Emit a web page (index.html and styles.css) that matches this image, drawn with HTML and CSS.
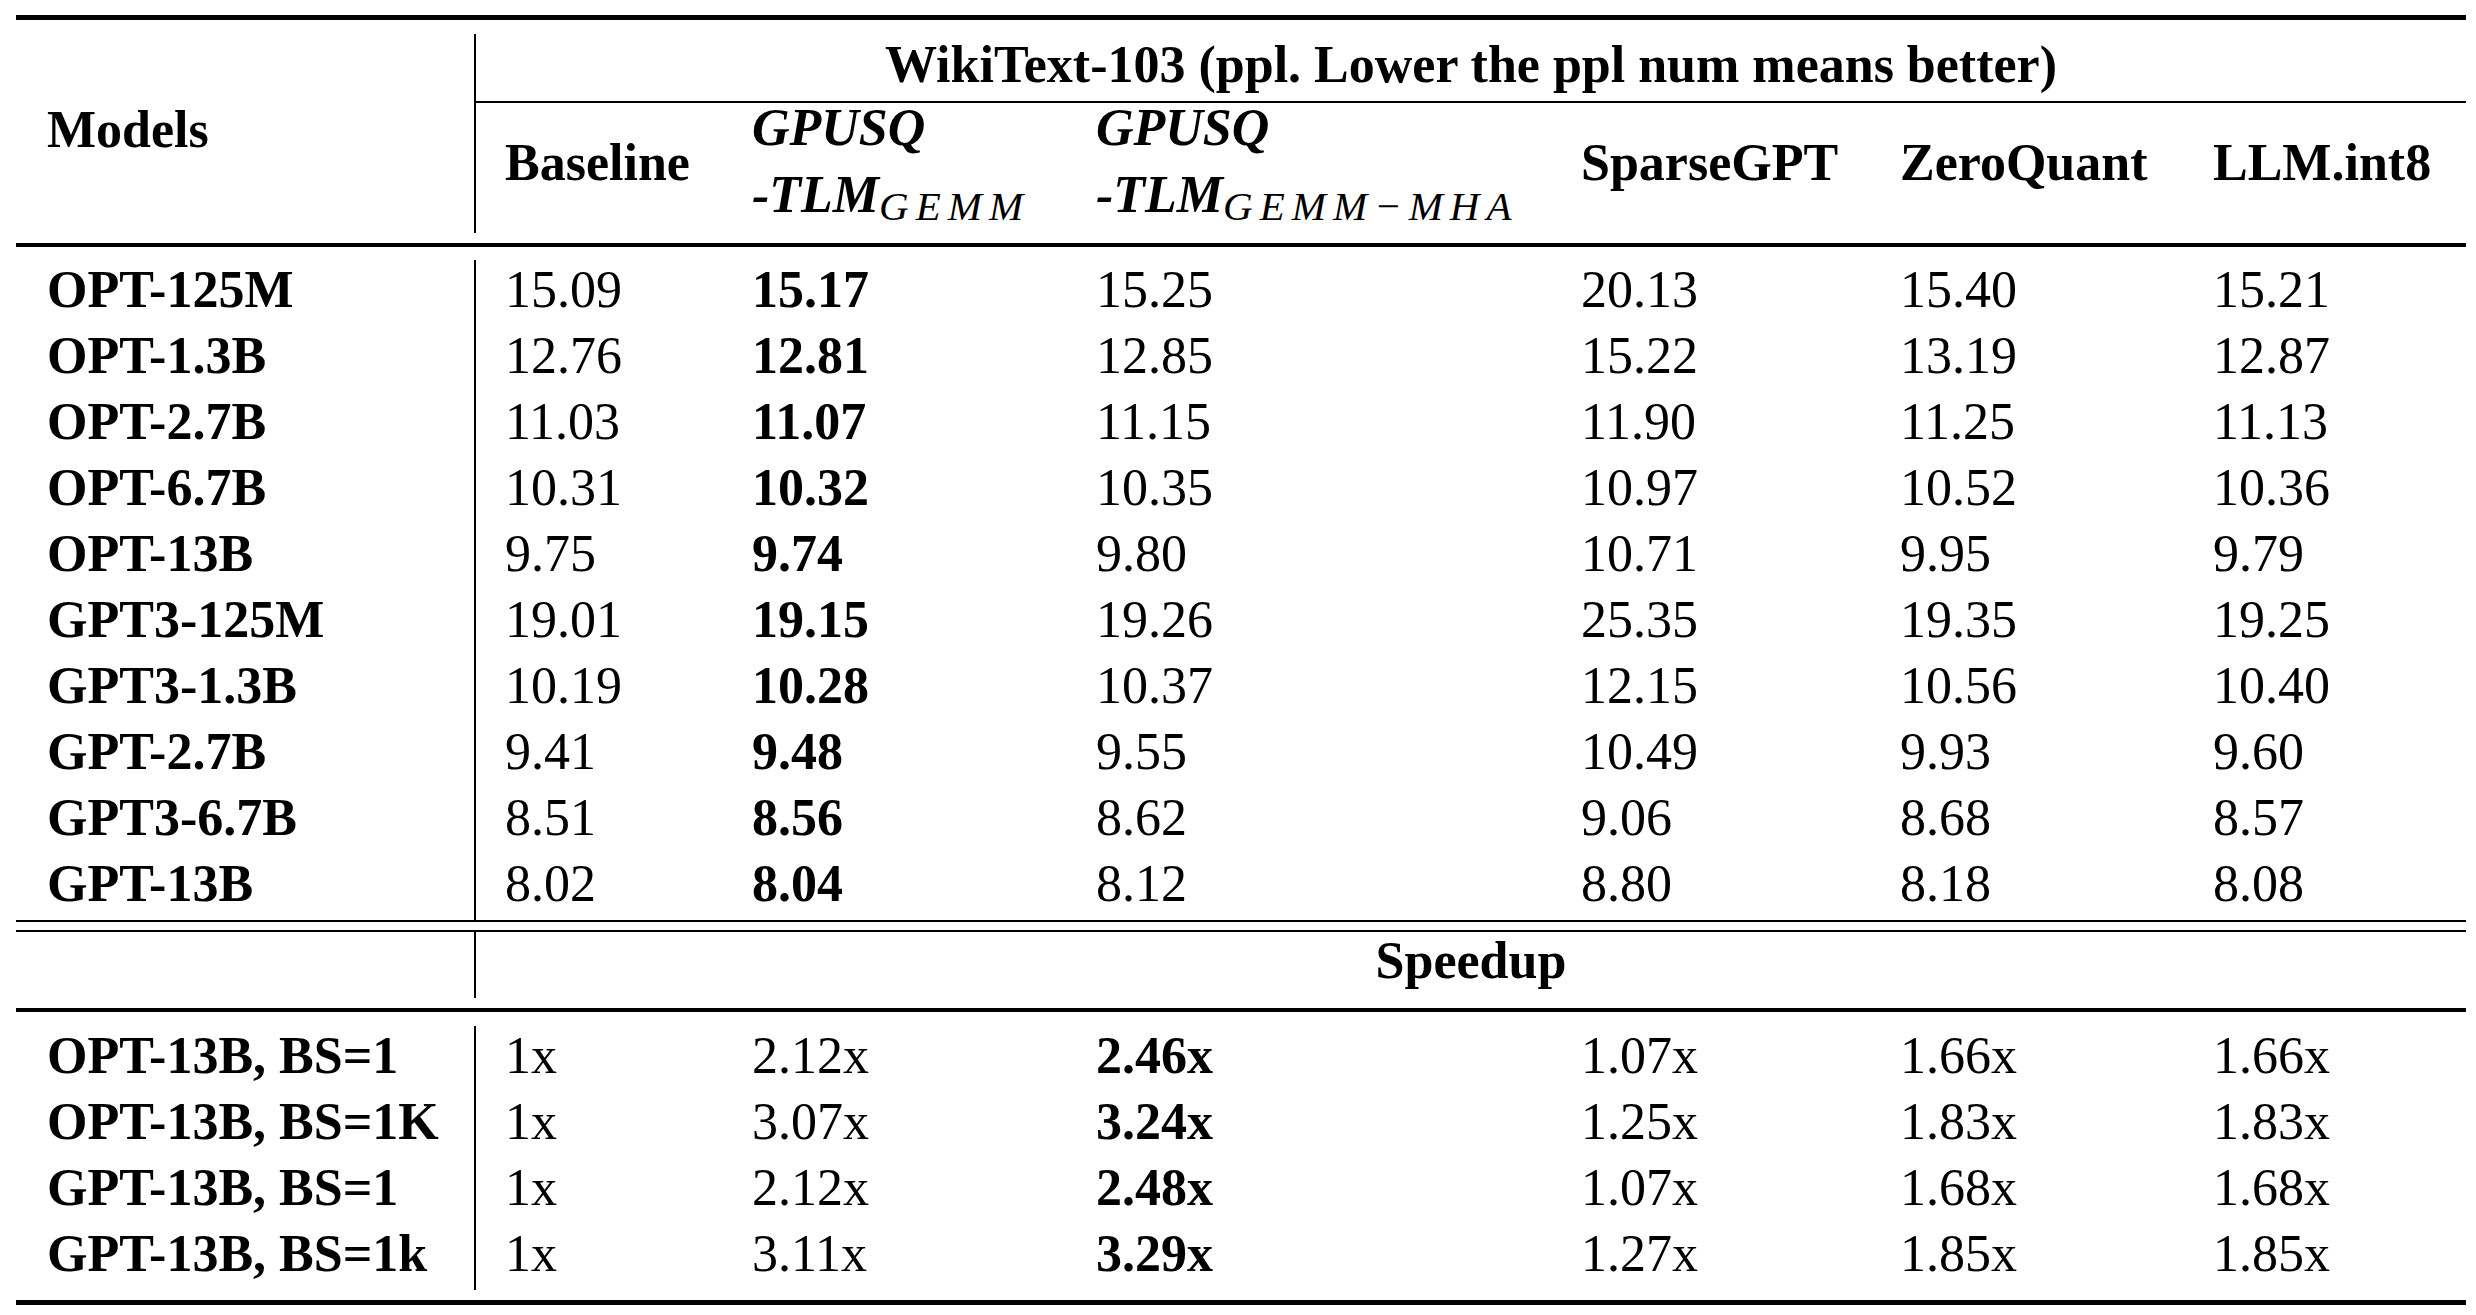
FILE: index.html
```html
<!DOCTYPE html>
<html lang="en">
<head>
<meta charset="utf-8">
<title>WikiText-103 results</title>
<link rel="stylesheet" href="styles.css">
</head>
<body>
<div class="tbl">
  <div class="rule r5"></div>

  <div class="head">
    <div class="models">Models</div>
    <div class="head-right">
      <div class="wiki">WikiText-103 (ppl. Lower the ppl num means better)</div>
      <div class="subhead">
        <div class="sh first single">Baseline</div>
        <div class="sh double"><span class="ln l1">GPUSQ</span><span class="ln l2">-TLM<span class="sub">GEMM</span></span></div>
        <div class="sh double"><span class="ln l1">GPUSQ</span><span class="ln l2">-TLM<span class="sub">GEMM−MHA</span></span></div>
        <div class="sh single">SparseGPT</div>
        <div class="sh single">ZeroQuant</div>
        <div class="sh single">LLM.int8</div>
      </div>
    </div>
  </div>

  <div class="rule r4"></div>

  <div class="sec sec-ppl">
    <div class="c b">OPT-125M</div><div class="c v">15.09</div><div class="c b">15.17</div><div class="c">15.25</div><div class="c">20.13</div><div class="c">15.40</div><div class="c">15.21</div>
    <div class="c b">OPT-1.3B</div><div class="c v">12.76</div><div class="c b">12.81</div><div class="c">12.85</div><div class="c">15.22</div><div class="c">13.19</div><div class="c">12.87</div>
    <div class="c b">OPT-2.7B</div><div class="c v">11.03</div><div class="c b">11.07</div><div class="c">11.15</div><div class="c">11.90</div><div class="c">11.25</div><div class="c">11.13</div>
    <div class="c b">OPT-6.7B</div><div class="c v">10.31</div><div class="c b">10.32</div><div class="c">10.35</div><div class="c">10.97</div><div class="c">10.52</div><div class="c">10.36</div>
    <div class="c b">OPT-13B</div><div class="c v">9.75</div><div class="c b">9.74</div><div class="c">9.80</div><div class="c">10.71</div><div class="c">9.95</div><div class="c">9.79</div>
    <div class="c b">GPT3-125M</div><div class="c v">19.01</div><div class="c b">19.15</div><div class="c">19.26</div><div class="c">25.35</div><div class="c">19.35</div><div class="c">19.25</div>
    <div class="c b">GPT3-1.3B</div><div class="c v">10.19</div><div class="c b">10.28</div><div class="c">10.37</div><div class="c">12.15</div><div class="c">10.56</div><div class="c">10.40</div>
    <div class="c b">GPT-2.7B</div><div class="c v">9.41</div><div class="c b">9.48</div><div class="c">9.55</div><div class="c">10.49</div><div class="c">9.93</div><div class="c">9.60</div>
    <div class="c b">GPT3-6.7B</div><div class="c v">8.51</div><div class="c b">8.56</div><div class="c">8.62</div><div class="c">9.06</div><div class="c">8.68</div><div class="c">8.57</div>
    <div class="c b">GPT-13B</div><div class="c v">8.02</div><div class="c b">8.04</div><div class="c">8.12</div><div class="c">8.80</div><div class="c">8.18</div><div class="c">8.08</div>
  </div>

  <div class="rule r2"></div>
  <div class="rule r2 dbl"></div>

  <div class="sp-head">
    <div class="sp-left"></div>
    <div class="sp-title">Speedup</div>
  </div>

  <div class="rule r4"></div>

  <div class="sec sec-speed">
    <div class="c b">OPT-13B, BS=1</div><div class="c v">1x</div><div class="c">2.12x</div><div class="c b">2.46x</div><div class="c">1.07x</div><div class="c">1.66x</div><div class="c">1.66x</div>
    <div class="c b">OPT-13B, BS=1K</div><div class="c v">1x</div><div class="c">3.07x</div><div class="c b">3.24x</div><div class="c">1.25x</div><div class="c">1.83x</div><div class="c">1.83x</div>
    <div class="c b">GPT-13B, BS=1</div><div class="c v">1x</div><div class="c">2.12x</div><div class="c b">2.48x</div><div class="c">1.07x</div><div class="c">1.68x</div><div class="c">1.68x</div>
    <div class="c b">GPT-13B, BS=1k</div><div class="c v">1x</div><div class="c">3.11x</div><div class="c b">3.29x</div><div class="c">1.27x</div><div class="c">1.85x</div><div class="c">1.85x</div>
  </div>

  <div class="rule r5 last"></div>
</div>
</body>
</html>
```

FILE: styles.css
```css
html, body {
  background: #fff;
}

body {
  margin: 0;
  padding: 15px 0 0 16px;
  font-family: "Liberation Serif", "Times New Roman", serif;
  font-size: 52px;
  color: #000;
}

.tbl {
  width: 2450px;
}

.rule {
  background: #000;
}

.r5 { height: 5px; }
.r4 { height: 4px; }
.r2 { height: 2px; }
.dbl { margin-top: 8px; }
.last { margin-top: 10px; }

/* header block */
.head {
  display: grid;
  grid-template-columns: 458px 1992px;
  margin: 14px 0 10px;
}

.models {
  padding: 66px 0 0 31px;
  line-height: 59px;
  font-weight: bold;
  white-space: nowrap;
}

.head-right {
  border-left: 2px solid #000;
}

.wiki {
  text-align: center;
  font-weight: bold;
  line-height: 61px;
  padding-bottom: 6px;
  border-bottom: 2px solid #000;
  white-space: nowrap;
}

.subhead {
  display: grid;
  grid-template-columns: 245px 344px 485px 319px 313px 284px;
  height: 130px;
}

.sh {
  padding-left: 31px;
  font-weight: bold;
  line-height: 50px;
  white-space: nowrap;
}

.sh.first {
  padding-left: 29px;
}

.sh.single {
  padding-top: 35px;
}

.sh.double {
  display: flex;
  flex-direction: column;
  gap: 17px;
  font-style: italic;
}

.sub {
  font-size: 41px;
  font-weight: normal;
  font-style: italic;
  letter-spacing: 7px;
  vertical-align: -8px;
  line-height: 0;
}

/* data sections */
.sec {
  display: grid;
  grid-template-columns: 458px 247px 344px 485px 319px 313px 284px;
  grid-auto-rows: 66px;
}

.sec-ppl {
  margin-top: 13px;
}

.sec-speed {
  margin: 14px 0 0;
}

.c {
  padding-left: 31px;
  line-height: 59px;
  white-space: nowrap;
}

.c.v {
  border-left: 2px solid #000;
  padding-left: 29px;
}

.b {
  font-weight: bold;
}

/* speedup header */
.sp-head {
  display: grid;
  grid-template-columns: 458px 1992px;
  height: 66px;
  margin-bottom: 10px;
}

.sp-title {
  border-left: 2px solid #000;
  text-align: center;
  font-weight: bold;
  line-height: 57px;
  padding-bottom: 9px;
}
```
